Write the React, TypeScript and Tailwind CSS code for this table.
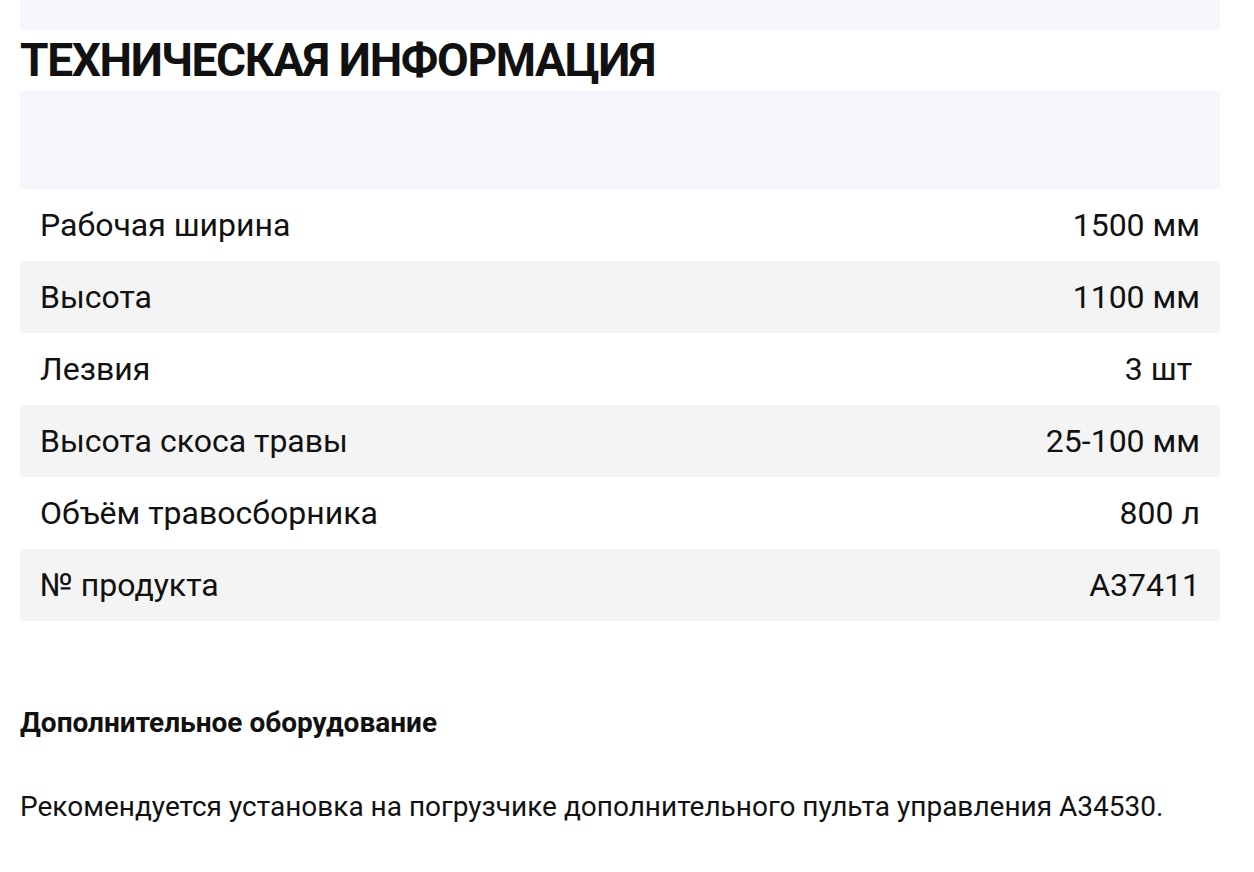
const specs = [
  { label: "Рабочая ширина", value: "1500 мм" },
  { label: "Высота", value: "1100 мм" },
  { label: "Лезвия", value: "3 шт\u00a0" },
  { label: "Высота скоса травы", value: "25-100 мм" },
  { label: "Объём травосборника", value: "800 л" },
  { label: "№ продукта", value: "A37411" },
];

export default function App() {
  return (
    <div className="min-h-[872px] bg-white px-5 text-[#111] font-['Roboto',sans-serif]">
      <div className="w-[1200px]">
        <div className="h-[30px] bg-[#f6f7fc]" />
        <h2 className="mt-[3px] text-[46px] font-bold leading-[54px] tracking-[-0.029em]">
          ТЕХНИЧЕСКАЯ ИНФОРМАЦИЯ
        </h2>

        <div className="mt-[4px] h-[98px] bg-[#f6f7fc]" />

        <div>
          {specs.map((row, i) => (
            <div
              key={row.label}
              className={`flex h-[72px] items-center justify-between px-5 text-[32px] ${
                i % 2 === 1 ? "bg-[#f4f4f4]" : "bg-white"
              }`}
            >
              <span>{row.label}</span>
              <span>{row.value}</span>
            </div>
          ))}
        </div>

        <h3 className="mt-[85px] text-[28px] font-bold leading-[34px]">
          Дополнительное оборудование
        </h3>
        <p className="mt-[50px] text-[28px] leading-[34px]">
          Рекомендуется установка на погрузчике дополнительного пульта управления A34530.
        </p>
      </div>
    </div>
  );
}
